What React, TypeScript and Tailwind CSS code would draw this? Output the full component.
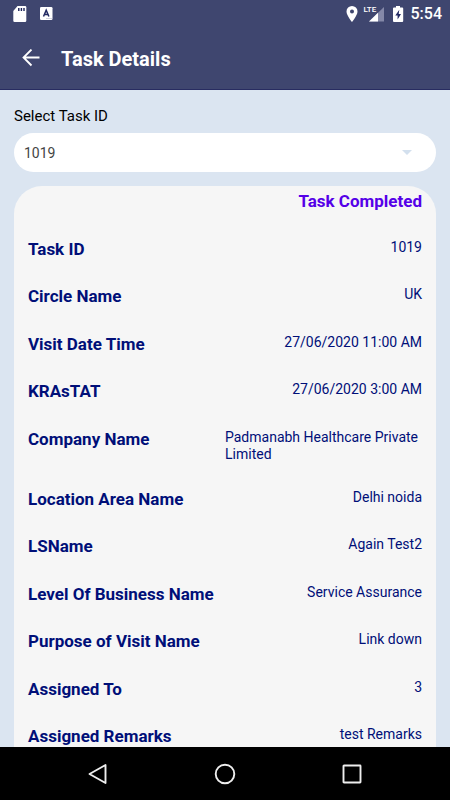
import { ReactNode } from "react";

const details: { label: string; value: string }[] = [
  { label: "Task ID", value: "1019" },
  { label: "Circle Name", value: "UK" },
  { label: "Visit Date Time", value: "27/06/2020 11:00 AM" },
  { label: "KRAsTAT", value: "27/06/2020 3:00 AM" },
  { label: "Company Name", value: "Padmanabh Healthcare Private Limited" },
  { label: "Location Area Name", value: "Delhi noida" },
  { label: "LSName", value: "Again Test2" },
  { label: "Level Of Business Name", value: "Service Assurance" },
  { label: "Purpose of Visit Name", value: "Link down" },
  { label: "Assigned To", value: "3" },
  { label: "Assigned Remarks", value: "test Remarks" },
];

function StatusBar() {
  return (
    <div className="flex h-7 items-center justify-between pr-2 pl-3 text-white">
      <div className="flex items-center gap-3">
        <svg className="h-4 w-4" viewBox="0 0 16 16" aria-hidden="true">
          <path d="M5.500 0H13a1.300 1.300 0 0 1 1.300 1.300v13.400A1.300 1.300 0 0 1 13 16H2.600a1.300 1.300 0 0 1-1.300-1.300V5z" fill="currentColor" />
          <path d="M6.800 2v3M9.400 2v3M12 2v3" stroke="#1a2157" strokeWidth="1.400" />
        </svg>
        <svg className="h-3.5 w-3.5" viewBox="0 0 14 14" aria-hidden="true">
          <rect x="0" y="0" width="12.500" height="13" rx="1.300" fill="currentColor" />
          <path d="M3.500 9.500 6.200 3.100 8.900 9.500M4.500 7.500h3.400" fill="none" stroke="#232a63" strokeWidth="1.500" />
          <path d="M6.500 11.500h5" stroke="#a4a7c0" strokeWidth="1" strokeDasharray="1 1" />
        </svg>
      </div>
      <div className="flex items-center">
        <svg className="h-4 w-3" viewBox="0 0 12 16" aria-hidden="true">
          <path fillRule="evenodd" d="M6 0a5.500 5.500 0 0 0-5.500 5.500C.500 9.600 6 16 6 16s5.500-6.400 5.500-10.500A5.500 5.500 0 0 0 6 0m0 3.500a2 2 0 1 1 0 4 2 2 0 0 1 0-4" fill="currentColor" />
        </svg>
        <div className="relative ml-1.5 h-4 w-5">
          <svg className="h-4 w-5" viewBox="0 0 20 16" aria-hidden="true">
            <path d="M20 1v14.500H5z" fill="#8488a8" />
            <path d="M14 6.800v8.700H5z" fill="currentColor" />
          </svg>
          <span className="absolute top-0 left-0 bg-[#3f466f] text-[8px] leading-[7px] font-medium">LTE</span>
        </div>
        <svg className="ml-2 h-4 w-3" viewBox="0 0 12 16" aria-hidden="true">
          <path d="M4 0h4v1.500h2.200A1 1 0 0 1 11.200 2.500V15a1 1 0 0 1-1 1H2a1 1 0 0 1-1-1V2.500a1 1 0 0 1 1-1h2z" fill="currentColor" />
          <path d="M7.300 3.700 3.300 9.600h2.300v4L9 8H6.700z" fill="#232a63" />
        </svg>
        <time className="ml-[7px] text-base leading-5 font-medium">5:54</time>
      </div>
    </div>
  );
}

function NavButton({ label, children }: { label: string; children: ReactNode }) {
  return (
    <button type="button" aria-label={label} className="flex h-10 w-10 items-center justify-center text-[#eeeeee]">
      <svg className="h-6 w-6" viewBox="0 0 24 24" fill="none" stroke="currentColor" strokeWidth="1.900" strokeLinejoin="round" aria-hidden="true">
        {children}
      </svg>
    </button>
  );
}

export default function App() {
  return (
    <div className="flex h-screen flex-col bg-[#dbe5f1] font-[Roboto,sans-serif]">
      <header className="shrink-0 border-b border-[#282c61] bg-[#3f466f]">
        <StatusBar />
        <div className="flex h-[61px] items-center gap-5 px-[21px] text-white">
          <button type="button" aria-label="Back" className="flex h-6 w-5 items-center">
            <svg className="h-5 w-5" viewBox="0 0 20 20" fill="none" stroke="currentColor" strokeWidth="1.800" aria-hidden="true">
              <path d="M18.500 8.500H2.500M10.500.500 2.500 8.500l8 8" />
            </svg>
          </button>
          <h1 className="text-xl font-bold">Task Details</h1>
        </div>
      </header>

      <main className="flex min-h-0 flex-1 flex-col overflow-hidden px-3.5 pt-3.5">
        <label htmlFor="task" className="text-[15px] leading-6 text-black">Select Task ID</label>
        <div className="relative mt-[5px] shrink-0">
          <select id="task" defaultValue="1019" className="block h-[39px] w-full appearance-none rounded-full bg-white px-2.5 pt-px text-sm text-[#444444]">
            <option>1019</option>
          </select>
          <svg className="pointer-events-none absolute top-[17px] right-6 h-[5px] w-2.5" viewBox="0 0 10 5" aria-hidden="true">
            <path d="M0 0h10L5 5z" fill="#d3e0ee" />
          </svg>
        </div>

        <section className="mt-3.5 flex min-h-0 flex-1 flex-col rounded-t-[28px] bg-[#f6f6f6] px-3.5 pt-1">
          <p className="text-right text-[17px] leading-[22px] font-bold text-[#5500e8]">Task Completed</p>
          <dl className="mt-[26px] flex flex-1 flex-col justify-between text-[#000f78]">
            {details.map(({ label, value }) => (
              <div key={label} className="flex items-start justify-between">
                <dt className="text-[17px] leading-[22px] font-bold">{label}</dt>
                <dd className="max-w-1/2 pt-px text-sm leading-[17px]">{value}</dd>
              </div>
            ))}
          </dl>
        </section>
      </main>

      <nav aria-label="System" className="flex h-[53px] shrink-0 items-center justify-around bg-black px-[34px]">
        <NavButton label="Back">
          <path d="M19.500 3v18L3.500 12z" />
        </NavButton>
        <NavButton label="Home">
          <circle cx="12" cy="12" r="9.300" />
        </NavButton>
        <NavButton label="Recent apps">
          <rect x="3.500" y="3.500" width="17" height="17" rx="0.500" />
        </NavButton>
      </nav>
    </div>
  );
}
